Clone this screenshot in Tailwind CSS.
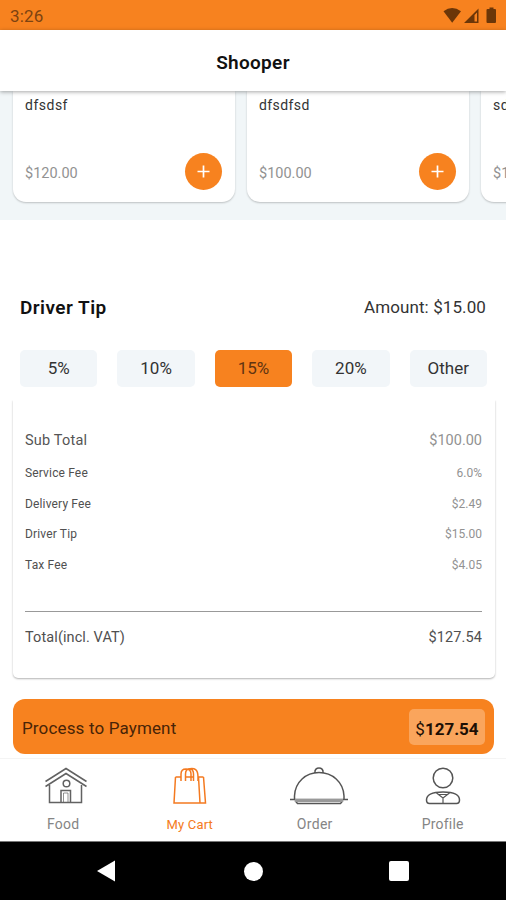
<!DOCTYPE html>
<html lang="en">
<head>
<meta charset="utf-8">
<title>Shooper</title>
<script src="https://cdn.jsdelivr.net/npm/@tailwindcss/browser@4"></script>
</head>
<body class="bg-white">
<div class="w-[506px] h-[900px] overflow-hidden flex flex-col bg-white font-['Roboto',sans-serif] text-[#333] whitespace-nowrap">
  <div class="h-[30px] shrink-0 bg-[#f7821f] flex items-center justify-between pl-[10px] pr-[8px] pt-[1px] text-[#7d4311]">
    <span class="text-[17px] leading-5 tracking-[0.2px]">3:26</span>
    <svg class="w-[56px] h-[20px]" viewBox="0 0 56 20" fill="#6b3608"><path d="M1.500 5.200Q10 -1.200 19 5.200L10.200 16.700Z"/><path d="M22 17L36.500 2.500V17ZM32.500 15.500H35V6.500L32.500 9Z" fill-rule="evenodd"/><path d="M44.500 4q0-1 1-1h2V1.500h4V3h1.500q1 0 1 1v12q0 1-1 1h-7.500q-1 0-1-1Z"/></svg>
  </div>
  <header class="relative z-10 h-[61px] shrink-0 bg-white shadow-[0_1px_4px_rgba(0,0,0,0.35)] flex items-center justify-center pt-[4px]">
    <h1 class="text-[19px] leading-6 font-semibold text-[#111] tracking-[0.3px]">Shooper</h1>
  </header>
  <section class="h-[129px] shrink-0 bg-[#f1f6f8] flex gap-[12px] pl-[13px] overflow-hidden">
    <article class="w-[222px] h-[111px] shrink-0 bg-white rounded-b-[13px] shadow-[0_1px_2px_rgba(0,0,0,0.22)] px-[12px] flex flex-col justify-between pt-[5px] pb-[12px]">
      <span class="text-[14px] leading-[18px] tracking-[0.5px]">dfsdsf</span>
      <div class="flex items-center justify-between"><span class="text-[14.500px] text-[#929292] pt-[4px]">$120.00</span>
      <div class="size-[37px] mr-[1px] rounded-full bg-[#f7821f] flex items-center justify-center"><svg class="size-[13px]" viewBox="0 0 13 13" stroke="#fff" stroke-width="1.700"><path d="M6.500 0.500v12M0.500 6.500h12"/></svg></div></div>
    </article>
    <article class="w-[222px] h-[111px] shrink-0 bg-white rounded-b-[13px] shadow-[0_1px_2px_rgba(0,0,0,0.22)] px-[12px] flex flex-col justify-between pt-[5px] pb-[12px]">
      <span class="text-[14px] leading-[18px] tracking-[0.4px]">dfsdfsd</span>
      <div class="flex items-center justify-between"><span class="text-[14.500px] text-[#929292] pt-[4px]">$100.00</span>
      <div class="size-[37px] mr-[1px] rounded-full bg-[#f7821f] flex items-center justify-center"><svg class="size-[13px]" viewBox="0 0 13 13" stroke="#fff" stroke-width="1.700"><path d="M6.500 0.500v12M0.500 6.500h12"/></svg></div></div>
    </article>
    <article class="w-[222px] h-[111px] shrink-0 bg-white rounded-b-[13px] shadow-[0_1px_2px_rgba(0,0,0,0.22)] px-[12px] flex flex-col justify-between pt-[5px] pb-[12px]">
      <span class="text-[14px] leading-[18px] tracking-[0.45px]">sdfsdf</span>
      <div class="h-[37px] flex items-center"><span class="text-[14.500px] text-[#929292] pt-[4px]">$100.00</span></div>
    </article>
  </section>
  <div class="mt-[76px] h-[24px] shrink-0 px-[20px] flex items-center justify-between">
    <h2 class="text-[19px] font-semibold text-[#111] tracking-[0.45px]">Driver Tip</h2>
    <span class="text-[17px] text-[#333] tracking-[0.1px]">Amount: $15.00</span>
  </div>
  <div class="mt-[30px] h-[37px] shrink-0 pl-[20px] pr-[19px] grid grid-cols-5 gap-[20px] text-[17px] text-center leading-[36px]">
    <div class="bg-[#f2f6f9] rounded-[5px]">5%</div>
    <div class="bg-[#f2f6f9] rounded-[5px]">10%</div>
    <div class="bg-[#f7821f] rounded-[5px] text-[#613411]">15%</div>
    <div class="bg-[#f2f6f9] rounded-[5px]">20%</div>
    <div class="bg-[#f2f6f9] rounded-[5px]">Other</div>
  </div>
  <div class="shrink-0 pt-[13px] h-[295px] overflow-hidden">
    <section class="ml-[13px] mr-[11px] h-[278px] rounded-b-[5px] shadow-[0_1px_2px_rgba(0,0,0,0.3)] [clip-path:inset(0_-4px_-4px_-4px)] pl-[12px] pr-[13px] pt-[31px] text-[12px] text-[#505050]">
      <div class="h-[20px] flex justify-between items-center text-[14.500px]"><span class="tracking-[0.2px] text-[#555]">Sub Total</span><span class="text-[#929292]">$100.00</span></div>
      <div class="mt-[6px] h-[31px] flex justify-between items-center tracking-[0.15px]"><span>Service Fee</span><span class="text-[#929292] tracking-normal">6.0%</span></div>
      <div class="h-[31px] flex justify-between items-center tracking-[0.15px]"><span>Delivery Fee</span><span class="text-[#929292] tracking-normal">$2.49</span></div>
      <div class="h-[30px] flex justify-between items-center tracking-[0.15px]"><span>Driver Tip</span><span class="text-[#929292] tracking-normal">$15.00</span></div>
      <div class="h-[31px] flex justify-between items-center tracking-[0.15px]"><span>Tax Fee</span><span class="text-[#929292] tracking-normal">$4.05</span></div>
      <div class="mt-[31px] h-px bg-[#999]"></div>
      <div class="mt-[16px] h-[20px] flex justify-between items-center text-[14.500px]"><span class="tracking-[0.1px]">Total(incl. VAT)</span><span class="tracking-[0.1px]">$127.54</span></div>
    </section>
  </div>
  <div class="mt-[17px] ml-[13px] w-[481px] h-[55px] shrink-0 bg-[#f7821f] rounded-[12px] flex items-center justify-between pl-[9px] pr-[9px]">
    <span class="text-[17px] text-[#482407] pt-[4px] tracking-[0.15px]">Process to Payment</span>
    <span class="w-[76px] h-[36px] rounded-[5px] bg-[#faa55c] text-center text-[17px] leading-[40px] font-bold text-[#1d1005]"><span class="font-normal">$</span>127.54</span>
  </div>
  <nav class="mt-[4px] h-[83px] shrink-0 border-t border-[#f4f4f4] grid grid-cols-4 text-[14px] text-[#858585] text-center leading-[18px]">
    <div class="flex flex-col items-center pt-[8px]">
      <svg class="w-[44px] h-[38px] ml-[6px]" viewBox="0 0 44 38" fill="none" stroke="#626262" stroke-width="1.500"><path d="M1.500 14.500L22 1.500l20.500 13M1.500 19.500L22 6.500l20.500 13M5.500 18v17.500h32V18M17 35V23.500h9.500V35"/><path d="M19.500 35V26h4.500v9" stroke-width=".7"/><circle cx="22.500" cy="16.500" r="3.300"/></svg>
      <span class="mt-[10px] tracking-[0.3px]">Food</span>
    </div>
    <div class="flex flex-col items-center pt-[8px] text-[#f47a20]">
      <svg class="w-[36px] h-[38px]" viewBox="0 0 36 38" fill="none" stroke="#f47a20" stroke-width="1.500"><path d="M3.500 10L2 36h31.500L31.500 10M26.500 10L28 36M3.500 10H9M13.500 10h7.500M26.500 10h5M9 14V7q0-5 5-5t5 5v7M13.500 14V7q0-5 4-5t4 5v7M16 2c7-2 10 1 10 8v4"/></svg>
      <span class="mt-[11px] text-[13px] tracking-[0.2px]">My Cart</span>
    </div>
    <div class="flex flex-col items-center pt-[8px]">
      <svg class="w-[60px] h-[38px] ml-[5px]" viewBox="0 0 60 38" fill="none" stroke="#555" stroke-width="1.500"><path d="M5.500 32V29C6 15 17 5.500 30 5.500s24.500 9.500 25 23.500v3M26 5.500c-1-6 9-6 8 0M1 32.500h58M6 33.500l2.500 3h43l2.500-3"/><path d="M6 33.500h48" stroke="#999" stroke-width="3"/></svg>
      <span class="mt-[10px] mr-[3px] tracking-[0.3px]">Order</span>
    </div>
    <div class="flex flex-col items-center pt-[8px]">
      <svg class="w-[36px] h-[38px]" viewBox="0 0 36 38" fill="none" stroke="#555" stroke-width="1.500"><circle cx="18" cy="11" r="9.800"/><path d="M1.500 33c0-5 6-8 16.500-8s16.500 3 16.500 8q0 3.500-3 3.500h-27q-3 0-3-3.500Z"/><path d="M11.500 26l6.500 5 6.500-5M18 30.500v6M14 27.500h8" stroke-width="1.200"/></svg>
      <span class="mt-[10px] tracking-[0.2px]">Profile</span>
    </div>
  </nav>
  <div class="h-[60px] shrink-0 bg-black border-t border-[#777] flex items-center justify-between pl-[96px] pr-[97px] pb-[1px]">
    <svg class="w-[20px] h-[22px]" viewBox="0 0 20 22" fill="#fff"><path d="M1 11L19 0.500v21Z"/></svg>
    <div class="size-[19px] ml-[2px] rounded-full bg-white"></div>
    <div class="size-[20px] rounded-[2px] bg-white"></div>
  </div>
</div>
</body>
</html>
